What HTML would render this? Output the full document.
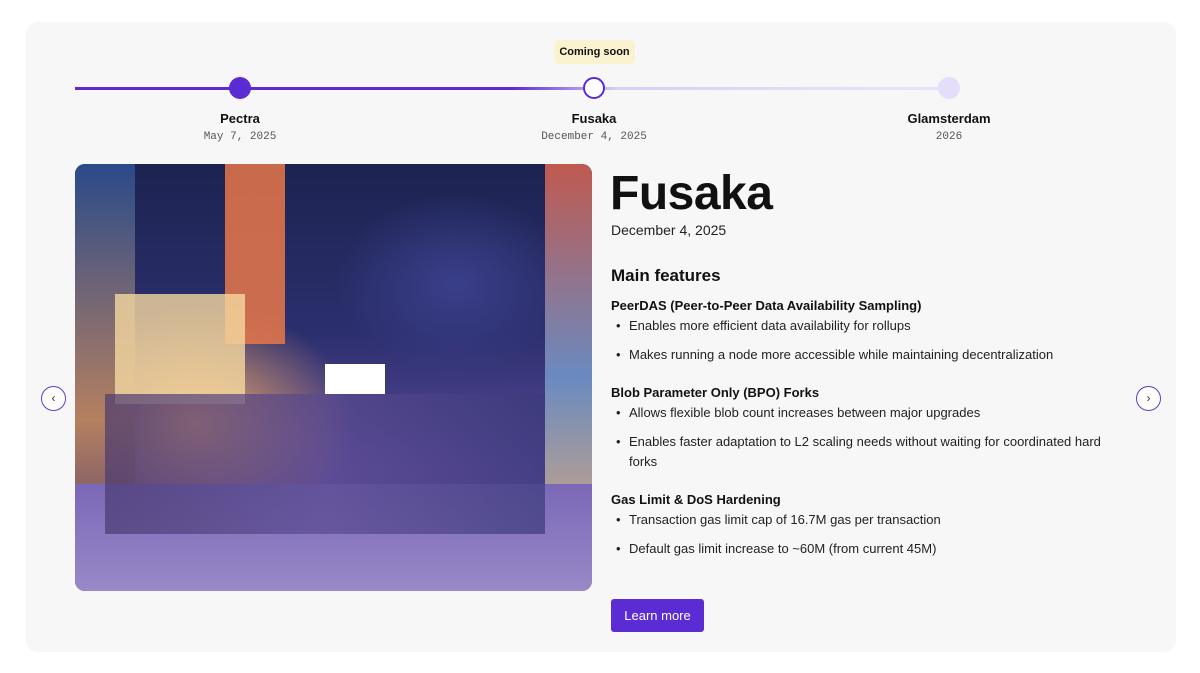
<!DOCTYPE html>
<html><head><meta charset="utf-8"><style>
*{margin:0;padding:0;box-sizing:border-box}
body{width:1200px;height:673px;background:#fff;font-family:"Liberation Sans",sans-serif;color:#111;position:relative;overflow:hidden}
.card{position:absolute;left:26px;top:22px;width:1150px;height:630px;background:#f7f7f8;border-radius:12px}
.abs{position:absolute}
.line{position:absolute;top:87px;height:3px;left:75px;width:875px;background:linear-gradient(90deg,#5b2bd4 0%,#5b2bd4 50%,#d9cff7 62%,#e9e4fb 100%)}
.lbl{position:absolute;width:200px;text-align:center;font-weight:bold;font-size:13px}
.dt{position:absolute;width:200px;text-align:center;font-family:"Liberation Mono",monospace;font-size:11px;color:#555}
.img{position:absolute;left:75px;top:164px;width:517px;height:427px;border-radius:10px;overflow:hidden;
background:
radial-gradient(ellipse 120px 90px at 380px 120px,#3a3f8a,transparent),
radial-gradient(ellipse 160px 120px at 120px 260px,#f0a860,transparent),
radial-gradient(ellipse 200px 120px at 300px 380px,#6a4aa8,transparent),
linear-gradient(180deg,#1c2350 0%,#2c2f6e 40%,#5a4a9a 70%,#7a5ab0 100%)}
.b{position:absolute}
ul{list-style:none}
li{position:relative;padding-left:18px;font-size:13px;line-height:20px;color:#222;margin-bottom:9px}
li:before{content:"•";position:absolute;left:5px}
h4{font-size:13px;font-weight:bold;margin-bottom:3px;color:#111}
.nav{position:absolute;width:25px;height:25px;border:1px solid #5b3fc4;border-radius:50%;color:#333;font-size:12px;text-align:center;line-height:22px;background:#fff}
</style></head><body>
<div class="card"></div>
<div class="abs" style="left:554px;top:40px;width:81px;height:24px;background:#fbf3cf;border-radius:5px;font-size:11px;font-weight:bold;text-align:center;line-height:24px">Coming soon</div>
<div class="line"></div>
<div class="abs" style="left:229px;top:77px;width:22px;height:22px;border-radius:50%;background:#5b2bd4"></div>
<div class="abs" style="left:583px;top:77px;width:22px;height:22px;border-radius:50%;background:#fff;border:2px solid #5b2bd4"></div>
<div class="abs" style="left:938px;top:77px;width:22px;height:22px;border-radius:50%;background:#e5defa"></div>
<div class="lbl" style="left:140px;top:111px">Pectra</div>
<div class="dt" style="left:140px;top:131px">May 7, 2025</div>
<div class="lbl" style="left:494px;top:111px">Fusaka</div>
<div class="dt" style="left:494px;top:131px">December 4, 2025</div>
<div class="lbl" style="left:849px;top:111px">Glamsterdam</div>
<div class="dt" style="left:849px;top:131px">2026</div>
<div class="img">
<div class="b" style="left:0;top:0;width:60px;height:427px;background:linear-gradient(180deg,#2a4a8a,#b58060 60%,#4a3a70)"></div>
<div class="b" style="left:150px;top:0;width:60px;height:180px;background:#e8784a;opacity:.85"></div>
<div class="b" style="left:40px;top:130px;width:130px;height:110px;background:#f5d8a0;opacity:.8"></div>
<div class="b" style="left:250px;top:200px;width:60px;height:30px;background:#fff"></div>
<div class="b" style="left:470px;top:0;width:47px;height:427px;background:linear-gradient(180deg,#c05a50,#6a8ac0 50%,#f0b070)"></div>
<div class="b" style="left:0;top:320px;width:517px;height:107px;background:linear-gradient(180deg,#7a68b8,#9a88c8)"></div>
<div class="b" style="left:30px;top:230px;width:440px;height:140px;background:linear-gradient(90deg,#4a3a70,#5a4a90,#3a3a7a);opacity:.7"></div>
</div>
<div class="nav" style="left:41px;top:386px">‹</div>
<div class="nav" style="left:1136px;top:386px">›</div>
<div class="abs" style="left:610px;top:166px;font-size:48px;font-weight:bold;letter-spacing:-0.5px">Fusaka</div>
<div class="abs" style="left:611px;top:222px;font-size:14px;color:#222">December 4, 2025</div>
<div class="abs" style="left:611px;top:266px;font-size:17px;font-weight:bold">Main features</div>
<div class="abs" style="left:611px;top:298px;width:510px">
<h4>PeerDAS (Peer-to-Peer Data Availability Sampling)</h4>
<ul><li>Enables more efficient data availability for rollups</li><li>Makes running a node more accessible while maintaining decentralization</li></ul>
<h4 style="margin-top:20px">Blob Parameter Only (BPO) Forks</h4>
<ul><li>Allows flexible blob count increases between major upgrades</li><li>Enables faster adaptation to L2 scaling needs without waiting for coordinated hard forks</li></ul>
<h4 style="margin-top:20px">Gas Limit &amp; DoS Hardening</h4>
<ul><li>Transaction gas limit cap of 16.7M gas per transaction</li><li>Default gas limit increase to ~60M (from current 45M)</li></ul>
</div>
<div class="abs" style="left:611px;top:599px;width:93px;height:33px;background:#5b2bd4;border-radius:3px;color:#fff;font-size:13px;text-align:center;line-height:33px">Learn more</div>
</body></html>
